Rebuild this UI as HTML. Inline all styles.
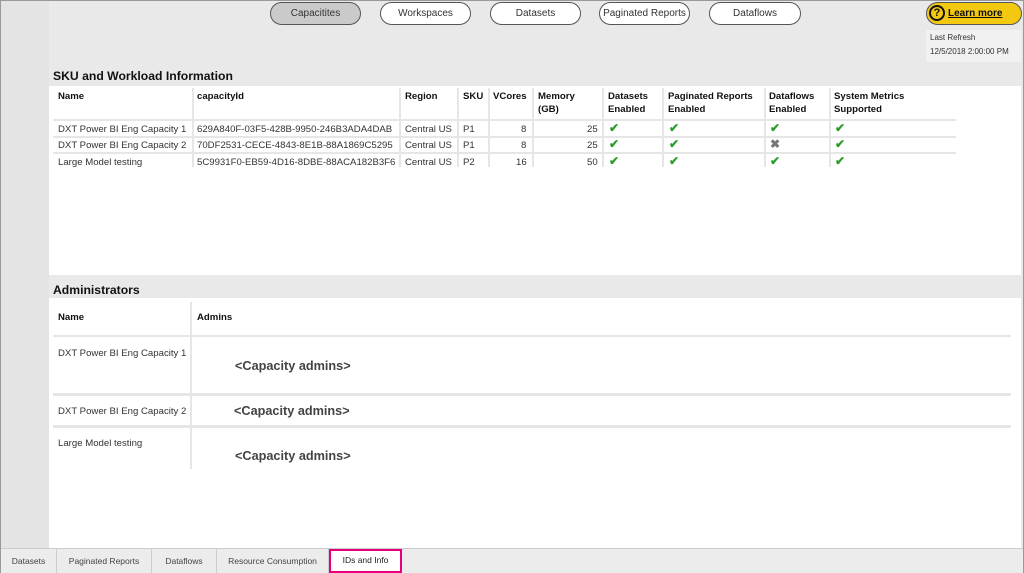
<!DOCTYPE html>
<html><head><style>
*{margin:0;padding:0;box-sizing:border-box}
body{width:1024px;height:573px;position:relative;overflow:hidden;background:#e9e9e9;font-family:"Liberation Sans",sans-serif;font-size:9.6px;color:#333}
.a{position:absolute;white-space:nowrap}
.btn{position:absolute;top:2px;height:23px;border:1.5px solid #555;border-radius:12px;background:#fff;display:flex;align-items:center;justify-content:center;font-size:10px;color:#333;white-space:nowrap}
.b{font-weight:bold;color:#111}
.vl{position:absolute;width:2px;background:#e6e6e6}
.hl{position:absolute;height:2px;background:#e6e6e6}
.ck{position:absolute;color:#2a9d2a;font-size:12px;font-weight:bold}
.tab{position:absolute;top:549px;height:24px;line-height:24px;font-size:8.5px;color:#444;text-align:center;border-right:1px solid #ccc;background:#ececec}
.adm{position:absolute;font-weight:bold;font-size:12.7px;color:#444}
</style></head><body>
<div class="a" style="left:0;top:0;width:1024px;height:573px;border:1px solid #999"></div>
<div class="a" style="left:1px;top:1px;width:48px;height:547px;background:#e4e4e4"></div>
<div class="btn" style="left:270px;width:91px;background:#cacaca">Capacitites</div>
<div class="btn" style="left:380px;width:91px">Workspaces</div>
<div class="btn" style="left:490px;width:91px">Datasets</div>
<div class="btn" style="left:599px;width:91px">Paginated Reports</div>
<div class="btn" style="left:709px;width:92px">Dataflows</div>
<div class="btn" style="left:926px;width:96px;background:#f2c811;font-weight:bold;text-decoration:underline;color:#111;justify-content:flex-start;padding-left:21px">Learn more</div>
<div class="a" style="left:929px;top:5px;width:16px;height:16px;border:2px solid #111;border-radius:50%;text-align:center;font-weight:bold;font-size:11px;line-height:13px;color:#111">?</div>
<div class="a" style="left:926px;top:30px;width:95px;height:32px;background:#f1f1f1"></div>
<div class="a" style="left:930px;top:33px;font-size:8px">Last Refresh</div>
<div class="a" style="left:930px;top:47px;font-size:8px">12/5/2018 2:00:00 PM</div>
<div class="a b" style="left:53px;top:69px;font-size:12.2px">SKU and Workload Information</div>
<div class="a" style="left:49px;top:86px;width:972px;height:189px;background:#fff"></div>
<div class="vl" style="left:192px;top:88px;height:79px"></div>
<div class="vl" style="left:399px;top:88px;height:79px"></div>
<div class="vl" style="left:457px;top:88px;height:79px"></div>
<div class="vl" style="left:488px;top:88px;height:79px"></div>
<div class="vl" style="left:532px;top:88px;height:79px"></div>
<div class="vl" style="left:602px;top:88px;height:79px"></div>
<div class="vl" style="left:662px;top:88px;height:79px"></div>
<div class="vl" style="left:764px;top:88px;height:79px"></div>
<div class="vl" style="left:829px;top:88px;height:79px"></div>
<div class="hl" style="left:53px;top:119px;width:903px"></div>
<div class="hl" style="left:53px;top:136px;width:903px"></div>
<div class="hl" style="left:53px;top:152px;width:903px"></div>
<div class="a b" style="left:58px;top:91px">Name</div>
<div class="a b" style="left:197px;top:91px">capacityId</div>
<div class="a b" style="left:405px;top:91px">Region</div>
<div class="a b" style="left:463px;top:91px">SKU</div>
<div class="a b" style="left:493px;top:91px">VCores</div>
<div class="a b" style="left:538px;top:90px;line-height:13px">Memory<br>(GB)</div>
<div class="a b" style="left:608px;top:90px;line-height:13px">Datasets<br>Enabled</div>
<div class="a b" style="left:668px;top:90px;line-height:13px">Paginated Reports<br>Enabled</div>
<div class="a b" style="left:769px;top:90px;line-height:13px">Dataflows<br>Enabled</div>
<div class="a b" style="left:834px;top:90px;line-height:13px">System Metrics<br>Supported</div>
<div class="a" style="left:58px;top:124px">DXT Power BI Eng Capacity 1</div>
<div class="a" style="left:58px;top:140px">DXT Power BI Eng Capacity 2</div>
<div class="a" style="left:58px;top:157px">Large Model testing</div>
<div class="a" style="left:197px;top:124px">629A840F-03F5-428B-9950-246B3ADA4DAB</div>
<div class="a" style="left:197px;top:140px">70DF2531-CECE-4843-8E1B-88A1869C5295</div>
<div class="a" style="left:197px;top:157px">5C9931F0-EB59-4D16-8DBE-88ACA182B3F6</div>
<div class="a" style="left:405px;top:124px">Central US</div>
<div class="a" style="left:405px;top:140px">Central US</div>
<div class="a" style="left:405px;top:157px">Central US</div>
<div class="a" style="left:463px;top:124px">P1</div>
<div class="a" style="left:463px;top:140px">P1</div>
<div class="a" style="left:463px;top:157px">P2</div>
<div class="a" style="left:521px;top:124px">8</div>
<div class="a" style="left:521px;top:140px">8</div>
<div class="a" style="left:516px;top:157px">16</div>
<div class="a" style="left:587px;top:124px">25</div>
<div class="a" style="left:587px;top:140px">25</div>
<div class="a" style="left:587px;top:157px">50</div>
<div class="ck" style="left:609px;top:121px">✔</div><div class="ck" style="left:669px;top:121px">✔</div><div class="ck" style="left:770px;top:121px">✔</div><div class="ck" style="left:835px;top:121px">✔</div>
<div class="ck" style="left:609px;top:137px">✔</div><div class="ck" style="left:669px;top:137px">✔</div><div class="ck" style="left:770px;top:137px;color:#777">✖</div><div class="ck" style="left:835px;top:137px">✔</div>
<div class="ck" style="left:609px;top:154px">✔</div><div class="ck" style="left:669px;top:154px">✔</div><div class="ck" style="left:770px;top:154px">✔</div><div class="ck" style="left:835px;top:154px">✔</div>
<div class="a b" style="left:53px;top:283px;font-size:12.2px">Administrators</div>
<div class="a" style="left:49px;top:298px;width:972px;height:250px;background:#fff"></div>
<div class="vl" style="left:190px;top:302px;height:167px"></div>
<div class="hl" style="left:53px;top:335px;width:958px"></div>
<div class="hl" style="left:53px;top:393px;width:958px;height:3px"></div>
<div class="hl" style="left:53px;top:425px;width:958px;height:3px"></div>
<div class="a b" style="left:58px;top:312px">Name</div>
<div class="a b" style="left:197px;top:312px">Admins</div>
<div class="a" style="left:58px;top:348px">DXT Power BI Eng Capacity 1</div>
<div class="a" style="left:58px;top:406px">DXT Power BI Eng Capacity 2</div>
<div class="a" style="left:58px;top:438px">Large Model testing</div>
<div class="adm" style="left:235px;top:359px">&lt;Capacity admins&gt;</div>
<div class="adm" style="left:234px;top:404px">&lt;Capacity admins&gt;</div>
<div class="adm" style="left:235px;top:449px">&lt;Capacity admins&gt;</div>
<div class="a" style="left:1px;top:548px;width:1022px;height:25px;background:#ececec;border-top:1px solid #ccc"></div>
<div class="tab" style="left:1px;width:56px">Datasets</div>
<div class="tab" style="left:57px;width:95px">Paginated Reports</div>
<div class="tab" style="left:152px;width:65px">Dataflows</div>
<div class="tab" style="left:217px;width:112px">Resource Consumption</div>
<div class="tab" style="left:329px;width:73px;border:2.5px solid #e6007e;background:#fff;line-height:19px;color:#222">IDs and Info</div>
</body></html>
